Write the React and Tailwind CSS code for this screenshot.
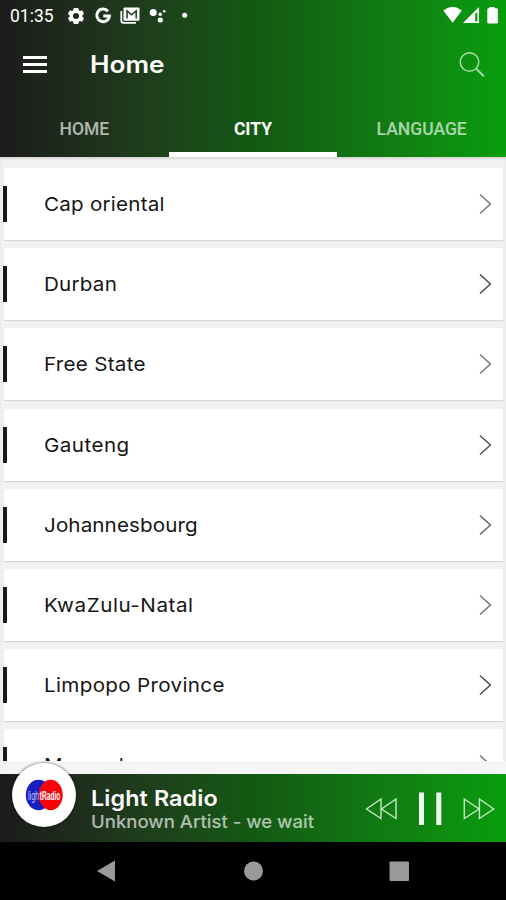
import React from "react";

const cities = [
  { name: "Cap oriental", chevron: "text-[#777]", tracking: "tracking-[0.2px]" },
  { name: "Durban", chevron: "text-[#4c4c4c]", tracking: "tracking-[0.2px]" },
  { name: "Free State", chevron: "text-[#777]", tracking: "tracking-[0.25px]" },
  { name: "Gauteng", chevron: "text-[#555]", tracking: "tracking-[0.4px]" },
  { name: "Johannesbourg", chevron: "text-[#666]", tracking: "tracking-[0.1px]" },
  { name: "KwaZulu-Natal", chevron: "text-[#777]", tracking: "tracking-[0.5px]" },
  { name: "Limpopo Province", chevron: "text-[#4c4c4c]", tracking: "tracking-[0.3px]" },
  { name: "Mpumalanga", chevron: "text-[#777]", tracking: "tracking-[0.3px]" },
];

const gradient = "bg-linear-to-r from-[#1c1b1b] via-[#135913] to-[#079d0d]";

function StatusBar() {
  return (
    <div className="flex h-8 items-center pl-[10px] pr-[7px] text-white">
      <span className="w-[58px] font-[Roboto] text-[17.5px] leading-8">01:35</span>
      <svg className="h-8 w-[130px]" viewBox="68 0 130 32" fill="#fff">
        <path
          fillRule="evenodd"
          d="M73.7 8h4.6l.5 2.3 1.2.7 2.1-.8 2 3.6-1.7 1.5v1.4l1.7 1.5-2 3.5-2.1-.8-1.2.8-.5 2.3h-4.6l-.5-2.3-1.2-.8-2.1.8-2-3.5 1.7-1.5v-1.4l-1.7-1.5 2-3.6 2.1.8 1.2-.7zM76 13a3 3 0 1 0 0 6 3 3 0 0 0 0-6z"
        />
        <path d="M108 11.3A6.3 6.3 0 1 0 109.4 16H103.3" fill="none" stroke="#fff" strokeWidth="3" />
        <path d="M121.3 11V20.5Q121.3 22.8 123.5 22.8H136" fill="none" stroke="#fff" strokeWidth="1.8" />
        <rect x="123.5" y="7.5" width="16" height="13.2" rx="1" />
        <path d="M127 18.5V10.8l4.6 4 4.6-4v7.7" fill="none" stroke="#183d18" strokeWidth="1.5" />
        <circle cx="153.2" cy="12.6" r="3.5" />
        <circle cx="160.2" cy="14.3" r="1.8" />
        <circle cx="160.3" cy="20" r="2.6" />
        <circle cx="164.2" cy="11.2" r="1.3" />
        <circle cx="184.7" cy="15.3" r="2.5" />
      </svg>
      <svg className="ml-auto h-8 w-14" viewBox="443 0 56 32" fill="#fff">
        <path d="M443.3 10.4Q452.5 3.2 461.8 10.4L452.6 22.8z" />
        <path fillRule="evenodd" d="M479 7v16h-16zM475.2 14v7.4h2.2V12z" />
        <path d="M489.5 8.3V7h5v1.3h2.2q1.2 0 1.2 1.2v12.7q0 1.2-1.2 1.2h-8.2q-1.2 0-1.2-1.2V9.5q0-1.2 1.2-1.2z" />
      </svg>
    </div>
  );
}

function Header() {
  return (
    <header className={`h-[157px] shrink-0 ${gradient}`}>
      <StatusBar />
      <div className="flex h-[65px] items-center pl-[23px] pr-[21px]">
        <div className="flex w-[67px] flex-col gap-[4px]">
          <span className="h-[3px] w-[23.5px] bg-white" />
          <span className="h-[3px] w-[23.5px] bg-white" />
          <span className="h-[3px] w-[23.5px] bg-white" />
        </div>
        <h1 className="origin-left scale-x-[1.09] font-[Inter] text-[24px] leading-[30px] font-semibold text-white">
          Home
        </h1>
        <svg className="ml-auto h-[26px] w-[26px]" viewBox="0 0 26 26" fill="none" stroke="#a9d8aa">
          <circle cx="10.5" cy="10" r="9.3" strokeWidth="1.5" />
          <path d="M17.3 16.8L24.8 24.3" strokeWidth="2" />
        </svg>
      </div>
      <nav className="grid h-[60px] grid-cols-3 grid-rows-[60px] text-center font-[Roboto] text-[17.5px] leading-[64px] font-medium text-white/65">
        <span>HOME</span>
        <span className="h-[60px] border-b-[5px] border-white font-bold text-white">CITY</span>
        <span>LANGUAGE</span>
      </nav>
    </header>
  );
}

function CityRow({ city }) {
  return (
    <li className="mb-[8.2px] flex h-[72px] items-center bg-white pr-[11px] shadow-[0_1px_1px_rgba(0,0,0,0.1)]">
      <span className="-ml-px h-9 w-1 bg-[#171717]" />
      <span className={`ml-[36.5px] origin-left scale-x-[1.085] whitespace-nowrap pt-[2px] font-[Inter] text-[19px] leading-6 text-[#161616] ${city.tracking}`}>
        {city.name}
      </span>
      <svg className={`ml-auto h-[22px] w-[13px] ${city.chevron}`} viewBox="0 0 13 22" fill="none" stroke="currentColor" strokeWidth="1.5">
        <path d="M1 1.5L11.4 11 1 20.5" />
      </svg>
    </li>
  );
}

function Player() {
  return (
    <footer className={`relative flex h-[68px] shrink-0 items-center pr-[11px] ${gradient}`}>
      <div className="absolute -top-[11px] left-3 h-16 w-16 rounded-full bg-white shadow-[0_0_2px_1px_rgba(0,0,0,0.35)]">
        <svg className="h-16 w-16" viewBox="0 0 64 64">
          <ellipse cx="26.5" cy="32" rx="12.7" ry="15.3" fill="#1720bf" />
          <ellipse cx="38.7" cy="32" rx="12" ry="15.3" fill="#fa0308" />
          <text x="16" y="36.5" fontFamily="Liberation Sans" fontSize="12.5" fill="#c7c7f5" textLength="11" lengthAdjust="spacingAndGlyphs">ligh</text>
          <text x="27.8" y="36.5" fontFamily="Liberation Sans" fontWeight="bold" fontSize="12.5" fill="#fff" textLength="20.5" lengthAdjust="spacingAndGlyphs">tRadio</text>
        </svg>
      </div>
      <div className="ml-[91px] whitespace-nowrap pt-[2px] font-[Inter]">
        <p className="origin-left scale-x-[1.06] text-[22px] leading-[25px] font-semibold tracking-[0.1px] text-white">Light Radio</p>
        <p className="origin-left scale-x-[1.06] text-[17.5px] leading-[22px] font-medium text-white/65">Unknown Artist - we wait</p>
      </div>
      <svg className="ml-auto h-9 w-[130px] shrink-0" viewBox="365 790.5 130 36" fill="none" stroke="#c5e8c5" strokeWidth="1.4">
        <path d="M381 799.5V819L366.5 809.5zM396 799.5V819L381.5 809.5z" />
        <path d="M419 793h5v32.5h-5zM436.3 793h5v32.5h-5z" fill="#f2fbf2" stroke="none" />
        <path d="M464.3 799.5V819L479 809.5zM479.4 799.5V819L493.7 809.5z" />
      </svg>
    </footer>
  );
}

function SystemNav() {
  return (
    <div className="h-[58px] shrink-0 bg-black">
      <svg className="h-[58px] w-full" viewBox="0 842 506 58" fill="#999">
        <path d="M97 871L115 860.5V881.5z" />
        <circle cx="253.5" cy="871" r="9.5" />
        <rect x="389.5" y="861.5" width="19.5" height="19.5" rx="1" />
      </svg>
    </div>
  );
}

export default function App() {
  return (
    <div className="flex h-[900px] w-[506px] flex-col overflow-hidden bg-[#f3f3f2]">
      <Header />
      <ul className="h-[604px] shrink-0 overflow-hidden bg-linear-to-b from-[#f2f1ef] to-[#f1f1f1] pt-[11px] pr-[3px] pl-1 shadow-[inset_0_2px_2px_rgba(0,0,0,0.1)]">
        {cities.map((city) => (
          <CityRow key={city.name} city={city} />
        ))}
      </ul>
      <div className="h-[13px] shrink-0 bg-[#f5f5f5]" />
      <Player />
      <SystemNav />
    </div>
  );
}
